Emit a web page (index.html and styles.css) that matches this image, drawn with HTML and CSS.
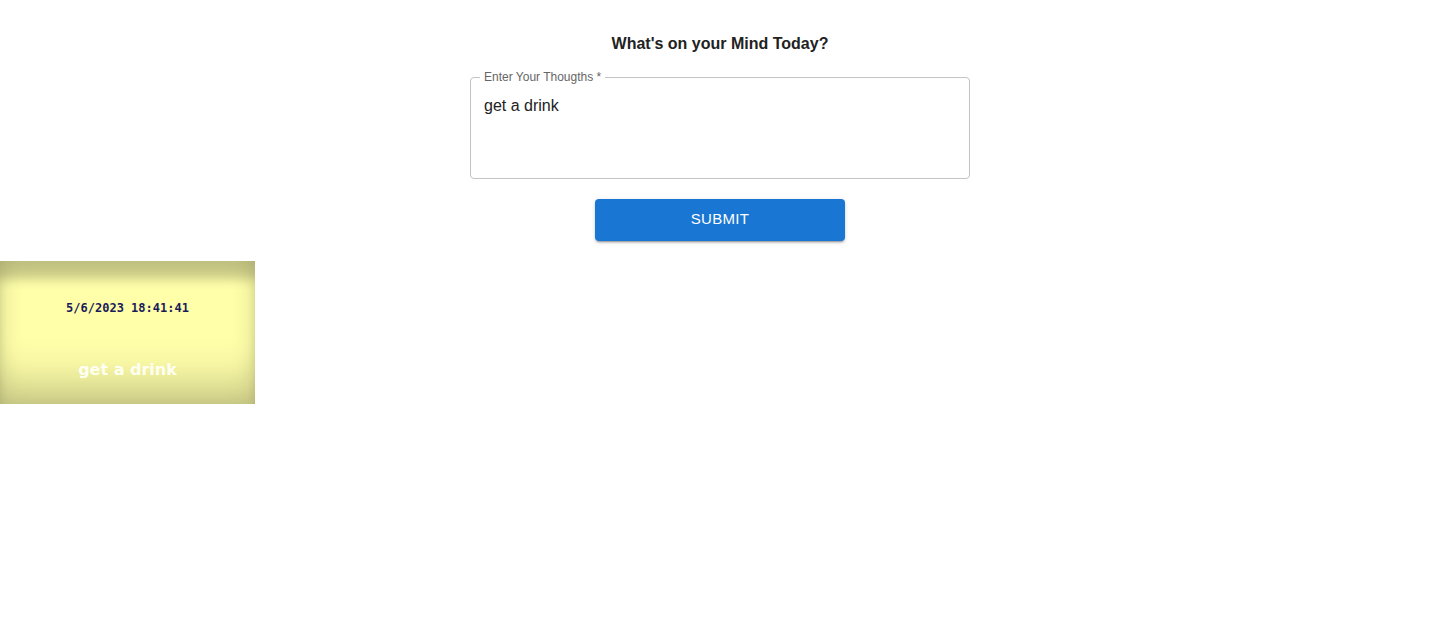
FILE: index.html
```html
<!DOCTYPE html>
<html>
<head>
<meta charset="utf-8">
<link rel="stylesheet" href="styles.css">
</head>
<body>
<div class="form">
  <h2 class="title">What's on your Mind Today?</h2>
  <fieldset class="field">
    <legend class="label">Enter Your Thougths *</legend>
    <div class="value">get a drink</div>
  </fieldset>
  <button class="submit">SUBMIT</button>
</div>
<div class="notes">
  <div class="note">
    <div class="note-date">5/6/2023 18:41:41</div>
    <div class="note-text">get a drink</div>
  </div>
</div>
</body>
</html>
```
FILE: styles.css
```css
html, body { margin: 0; padding: 0; background: #fff; }
body { font-family: "Liberation Sans", Arial, sans-serif; }
.form {
  display: flex;
  flex-direction: column;
  align-items: center;
  padding-top: 34px;
}
.title {
  margin: 0;
  font-size: 16px;
  line-height: 20px;
  font-weight: bold;
  color: #222;
}
.field {
  box-sizing: border-box;
  width: 500px;
  height: 108px;
  margin: 17px 0 0 0;
  border: 1px solid #c4c4c4;
  border-radius: 4px;
  padding: 0 13px;
}
.label {
  font-size: 12px;
  line-height: 12px;
  color: #666;
  padding: 0 4px;
  margin-left: -4px;
}
.value {
  font-size: 16px;
  line-height: 20px;
  color: #222;
  padding-top: 13px;
}
.submit {
  margin-top: 20px;
  width: 250px;
  height: 42px;
  padding: 0 0 3px 0;
  border: none;
  border-radius: 4px;
  background: #1976d2;
  color: #fff;
  font-family: "Liberation Sans", Arial, sans-serif;
  font-size: 15px;
  letter-spacing: 0.3px;
  box-shadow: 0 3px 1px -2px rgba(0,0,0,.2), 0 2px 2px 0 rgba(0,0,0,.14), 0 1px 5px 0 rgba(0,0,0,.12);
}
.notes { margin-top: 20px; display: flex; }
.note {
  width: 255px;
  height: 143px;
  background: #ffffaa;
  box-shadow: inset 0 22px 12px -4px rgba(0,0,0,0.2), inset 0 -45px 40px -20px rgba(0,0,0,0.18), inset 0 0 25px rgba(0,0,0,0.13);
  display: flex;
  flex-direction: column;
  align-items: center;
  box-sizing: border-box;
  padding-top: 40px;
}
.note-date {
  font-family: "DejaVu Sans Mono", monospace;
  font-weight: bold;
  font-size: 12px;
  color: #1b1b5a;
}
.note-text {
  margin-top: 45px;
  font-family: "DejaVu Sans", sans-serif;
  font-weight: bold;
  font-size: 16px;
  color: #fffff2;
}
```
